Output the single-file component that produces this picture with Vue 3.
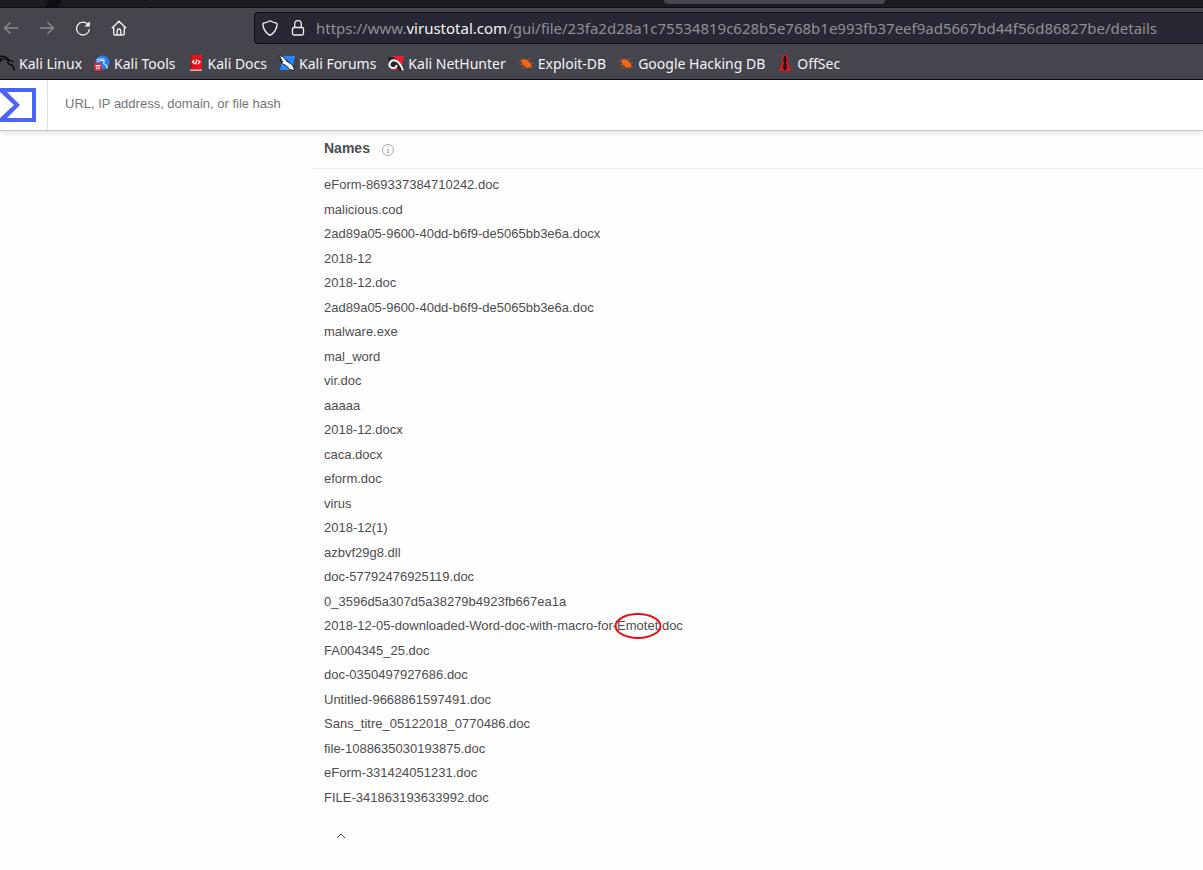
<script setup>
const bookmarks = [
  { label: 'Kali Linux', icon: 'linux' },
  { label: 'Kali Tools', icon: 'tools' },
  { label: 'Kali Docs', icon: 'docs' },
  { label: 'Kali Forums', icon: 'forums' },
  { label: 'Kali NetHunter', icon: 'nethunter' },
  { label: 'Exploit-DB', icon: 'exploit' },
  { label: 'Google Hacking DB', icon: 'exploit' },
  { label: 'OffSec', icon: 'offsec' },
]

const names = [
  'eForm-869337384710242.doc',
  'malicious.cod',
  '2ad89a05-9600-40dd-b6f9-de5065bb3e6a.docx',
  '2018-12',
  '2018-12.doc',
  '2ad89a05-9600-40dd-b6f9-de5065bb3e6a.doc',
  'malware.exe',
  'mal_word',
  'vir.doc',
  'aaaaa',
  '2018-12.docx',
  'caca.docx',
  'eform.doc',
  'virus',
  '2018-12(1)',
  'azbvf29g8.dll',
  'doc-57792476925119.doc',
  '0_3596d5a307d5a38279b4923fb667ea1a',
  '2018-12-05-downloaded-Word-doc-with-macro-for-Emotet.doc',
  'FA004345_25.doc',
  'doc-0350497927686.doc',
  'Untitled-9668861597491.doc',
  'Sans_titre_05122018_0770486.doc',
  'file-1088635030193875.doc',
  'eForm-331424051231.doc',
  'FILE-341863193633992.doc',
].map((text) => {
  const at = text.indexOf('Emotet')
  return at < 0
    ? { before: text, marked: '', after: '' }
    : { before: text.slice(0, at), marked: 'Emotet', after: text.slice(at + 6) }
})
</script>

<template>
  <div class="browser">
    <div class="tabstrip">
      <svg class="strip-art" width="160" height="7" viewBox="0 0 160 7" aria-hidden="true">
        <path d="M49 0h13l-4 7H45z" fill="#0e0f13" />
        <path d="M144 0h3v1h-3z" fill="#0e0f13" />
      </svg>
      <div class="tab"></div>
    </div>

    <div class="toolbar">
      <div class="nav">
        <button type="button" aria-label="Back" disabled>
          <svg width="16" height="16" viewBox="0 0 16 16"><path d="M15 8H1.500M7.500 2.500L1.500 8l6 5.500" /></svg>
        </button>
        <button type="button" aria-label="Forward" disabled>
          <svg width="16" height="16" viewBox="0 0 16 16"><path d="M1 8h13.500M8.500 2.500l6 5.500-6 5.500" /></svg>
        </button>
        <button type="button" aria-label="Reload">
          <svg width="16" height="16" viewBox="0 0 16 16">
            <path d="M13.200 4.800A6.400 6.400 0 1 0 14.400 9" />
            <path d="M14.800 1.200v5.300H9.500z" class="solid" />
          </svg>
        </button>
        <button type="button" aria-label="Home">
          <svg width="16" height="16" viewBox="0 0 16 16">
            <path d="M.8 8.200L8 1.200l7.200 7M2.700 7v6.700q0 1.300 1.300 1.300h8q1.300 0 1.300-1.300V7M6.200 15v-4.200q0-1.800 1.800-1.800t1.800 1.800V15" />
          </svg>
        </button>
      </div>
      <div class="urlbar">
        <div class="status">
          <svg width="16" height="16" viewBox="0 0 16 16" aria-hidden="true">
            <path d="M8 .8Q11 2.700 14.400 3.200q.8.200.7 1.200-.4 7-7.100 11Q1.300 11.400.9 4.400q-.1-1 .7-1.200Q5 2.700 8 .8z" />
          </svg>
          <svg width="16" height="16" viewBox="0 0 16 16" aria-hidden="true">
            <rect x="2.500" y="7.500" width="11" height="7.500" rx="1.500" />
            <path d="M4.700 7.500V4a3.300 3.300 0 0 1 6.600 0v3.500" />
          </svg>
        </div>
        <div class="address" role="textbox" aria-label="Address" contenteditable="true" spellcheck="false">https://www.<span class="host">virustotal.com</span>/gui/file/23fa2d28a1c75534819c628b5e768b1e993fb37eef9ad5667bd44f56d86827be/details</div>
      </div>
    </div>

    <nav class="bookmarks" aria-label="Bookmarks">
      <a v-for="b in bookmarks" :key="b.label" href="#">
        <svg width="16" height="16" viewBox="0 0 16 16" aria-hidden="true">
          <g v-if="b.icon === 'linux'" fill="none" stroke="#08080a" stroke-width="1.400">
            <path d="M0 1.500q5-1 8.500 1.500l1.500 2.500M0 4.500q5-2 9 .5M10 5q-2.500 2.500 0 4 3 .5 4.500 3l.8 3.500M9.500 5.500q4-.5 5 2M3 5l-3 2.500" />
          </g>
          <g v-else-if="b.icon === 'tools'">
            <circle cx="8.500" cy="7.500" r="7" fill="#267cf0" />
            <path d="M2.500 5q5-2.500 8 0M3 7q4-2.500 7.500-1-2 2.500.5 3.500t2 4" fill="none" stroke="#d6e6ff" stroke-width="1.200" />
            <rect x="0" y="8" width="7.500" height="8" rx="2" fill="#e52630" />
            <path d="M1.500 10.500h5M2.800 10.500v4M5 10.500v4" stroke="#fff" stroke-width="1" />
          </g>
          <g v-else-if="b.icon === 'docs'">
            <path d="M2 0h12v16H2z" fill="#e1131b" />
            <path d="M2 0h1.500v14H2z" fill="#8c1b25" />
            <path d="M2 14.500h12V16H2z" fill="#d8b6b8" />
            <path d="M6 5L4.500 7 7 8.800M8.800 4.500l-1.200 5M10 5.500l2 1.500-2 2" fill="none" stroke="#fff" stroke-width="1.300" />
          </g>
          <g v-else-if="b.icon === 'forums'">
            <path d="M4 1h12l-3 14H1z" fill="#2588fa" />
            <path d="M0 0l5 2 5 5 4 3 2 6-5-1-4-4-5-3z" fill="#17243a" />
            <path d="M1 1l4 2 3 4 5 3 2 5-4-1-4-4-4-2 1-1z" fill="#fff" />
          </g>
          <g v-else-if="b.icon === 'nethunter'">
            <path d="M4 1h12l-3 14H3z" fill="#ec2030" />
            <path d="M0 2h5l3 2 8 9v3h-4l-4-3-5 1-3-4z" fill="#26252c" />
            <path d="M15 15.500Q13 9 8.500 6 4 4 2 7.500 0 12 4.500 13q4 .5 4-3" fill="none" stroke="#fff" stroke-width="2" />
          </g>
          <g v-else-if="b.icon === 'exploit'">
            <path d="M0 6h4M2 10h4M3 13h4M10 5l3-2M12 8h3M11 12h4M4 3v3M9 12v2" stroke="#a9521f" stroke-width="1" />
            <path d="M3 5.500q3.500-2.500 7 0l3.500 4.500-1 2.500H8.500l-4-3z" fill="#f4650d" />
          </g>
          <g v-else>
            <path d="M5 0h6v8l3 7v1H2v-1l3-7z" fill="#d9161b" />
            <path d="M7 1h2v2l1 1-1 4 1 4-1 3H7l-1-3 1-4-1-4 1-1z" fill="#290a10" />
          </g>
        </svg>
        <span>{{ b.label }}</span>
      </a>
    </nav>
  </div>

  <header class="site">
    <a class="logo" href="#" aria-label="VirusTotal home">
      <svg width="36" height="34" viewBox="0 0 36 34">
        <path d="M0 0H36V34H0V30L14 17 0 4zM7 4L20 17 7 30H32V4z" fill="#4a63fb" fill-rule="evenodd" />
      </svg>
    </a>
    <input class="search" type="text" aria-label="Search" placeholder="URL, IP address, domain, or file hash" />
  </header>

  <main>
    <div class="heading">
      <h1>Names</h1>
      <svg width="12" height="12" viewBox="0 0 12 12" fill="none" stroke="#aaa" aria-hidden="true">
        <circle cx="6" cy="6" r="5.500" />
        <path d="M6 2.500v1M5 5h1v3.500M4.800 8.800h2.400" />
      </svg>
    </div>
    <ul>
      <li v-for="(n, i) in names" :key="i">{{ n.before }}<span v-if="n.marked" class="marked">{{ n.marked }}<svg class="ring" width="48" height="27" viewBox="0 0 48 27" aria-hidden="true"><ellipse cx="24" cy="13.500" rx="22.500" ry="12" /></svg></span>{{ n.after }}</li>
    </ul>
    <button class="collapse" type="button" aria-label="Show less">
      <svg width="10" height="6" viewBox="0 0 10 6"><path d="M1 5l4-4 4 4" /></svg>
    </button>
  </main>
</template>

<style>
body {
  background: #fefefe;
}
</style>

<style scoped>
* {
  box-sizing: border-box;
}
.browser {
  overflow: hidden;
  background: #45454e;
  border-bottom: 1px solid #0c0c12;
  color: #f4f4f6;
  font-family: "Noto Sans", sans-serif;
  font-size: 15px;
}
.tabstrip {
  position: relative;
  height: 8px;
  background: #1a1b20;
  border-bottom: 1px solid #0c0c12;
}
.strip-art {
  display: block;
}
.tab {
  position: absolute;
  top: 0;
  left: 664px;
  width: 221px;
  height: 4px;
  background: #45454e;
  border-radius: 0 0 4px 4px;
}
.toolbar {
  display: flex;
  align-items: center;
  padding: 4px 0;
}
.nav {
  display: flex;
  flex: 0 0 254px;
  gap: 20px;
  padding-left: 3px;
}
button {
  display: flex;
  padding: 0;
  border: 0;
  background: none;
}
.nav button:disabled {
  opacity: 0.4;
}
.nav svg,
.urlbar svg {
  display: block;
  flex: none;
  fill: none;
  stroke: #f4f4f6;
  stroke-width: 1.3;
}
.nav .solid {
  fill: #f4f4f6;
  stroke: none;
}
.urlbar {
  display: flex;
  flex: 1;
  align-items: center;
  gap: 10px;
  min-width: 0;
  height: 32px;
  padding-left: 7px;
  border: 1px solid #0c0c12;
  border-right: 0;
  border-radius: 4px 0 0 4px;
  background: #272833;
}
.status {
  display: flex;
  gap: 12px;
}
.address {
  flex: 1;
  overflow: hidden;
  color: #8f9096;
  white-space: nowrap;
  outline: 0;
}
.host {
  color: #f4f4f6;
}
.bookmarks {
  display: flex;
  gap: 12px;
  height: 31px;
  margin-left: -1px;
  padding-bottom: 1px;
  font-size: 14px;
}
.bookmarks a {
  display: flex;
  align-items: center;
  gap: 4px;
  color: inherit;
  text-decoration: none;
  white-space: nowrap;
}
.bookmarks svg {
  flex: none;
}
.site {
  position: relative;
  display: flex;
  height: 51px;
  background: #fff;
  border-bottom: 1px solid #c6c6c6;
  box-shadow: 0 2px 6px rgba(0, 0, 0, 0.12);
}
.logo {
  display: flex;
  align-items: center;
  width: 48px;
  border-right: 1px solid #e2e2e2;
}
.search {
  flex: 1;
  padding: 0 17px 4px;
  border: 0;
  background: none;
  font: 13px "Liberation Sans", Arial, sans-serif;
  outline: 0;
}
.search::placeholder {
  color: #757575;
}
main {
  margin-left: 311px;
  color: #4d4d4d;
  font: 13px/1.5 "Liberation Sans", Arial, sans-serif;
}
.heading {
  display: flex;
  align-items: center;
  gap: 12px;
  height: 38px;
  padding-left: 13px;
  border-bottom: 1px solid #eee;
}
h1 {
  margin: 0 0 4px;
  font-size: 14px;
  line-height: 20px;
}
ul {
  margin: 0;
  padding: 4px 13px 0;
  list-style: none;
}
li {
  padding: 2px 0 3px;
}
.marked {
  position: relative;
}
.ring {
  position: absolute;
  top: 50%;
  left: 50%;
  transform: translate(-50%, -50%);
  fill: none;
  stroke: #ec0d12;
  stroke-width: 2;
}
.collapse {
  margin: 23px 0 0 25px;
}
.collapse svg {
  fill: none;
  stroke: #444;
}
</style>
